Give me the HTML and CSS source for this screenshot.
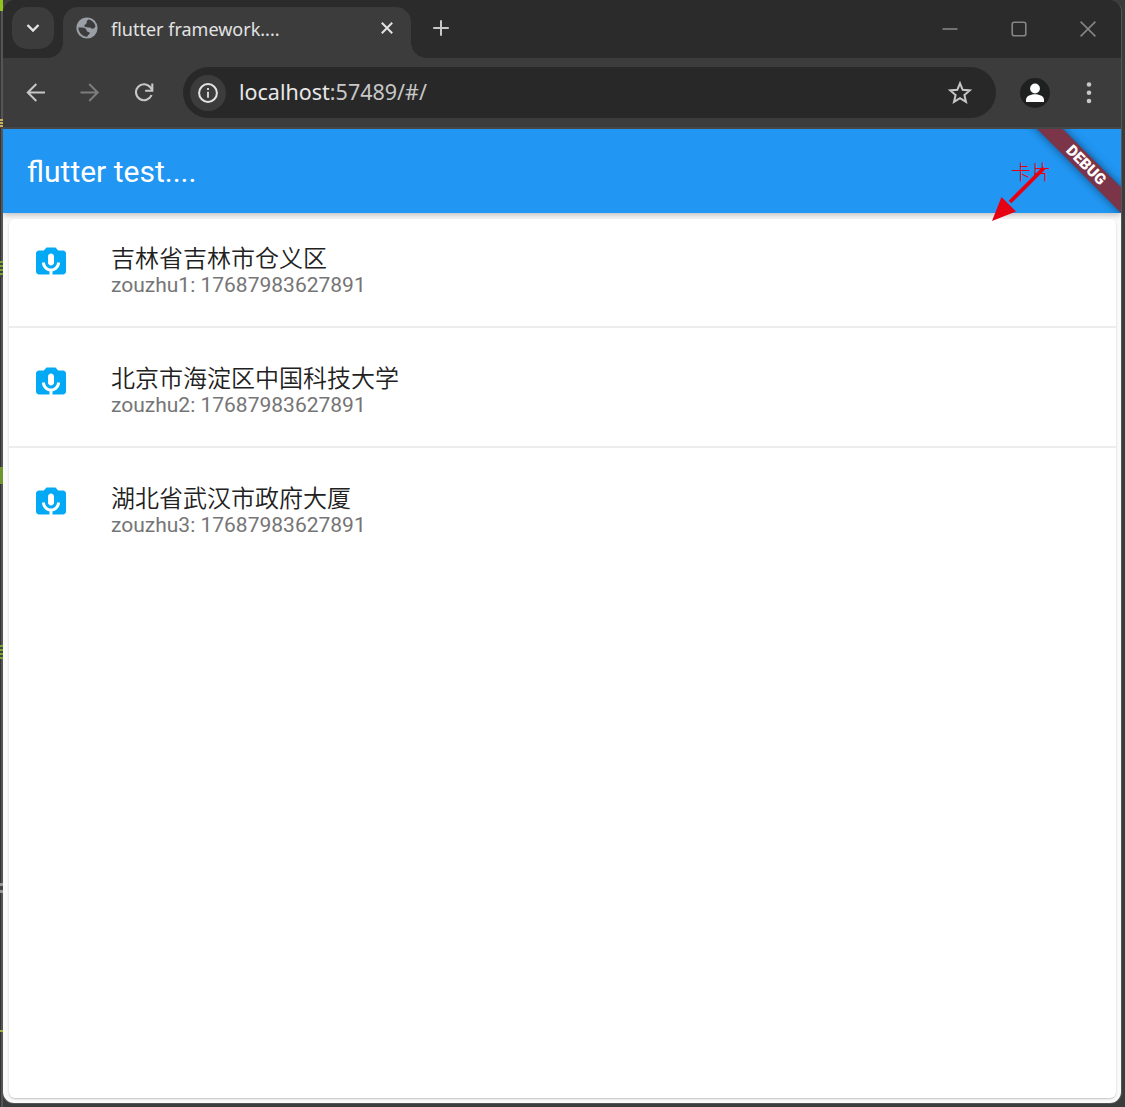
FILE: index.html
```html
<!DOCTYPE html>
<html lang="zh-CN">
<head>
<meta charset="utf-8">
<title>flutter framework....</title>
<link rel="stylesheet" href="styles.css">
</head>
<body>
<div class="desktop-edge" aria-hidden="true"><i class="mark m1"></i><i class="mark m2"></i><i class="mark m3"></i><i class="mark m4"></i><i class="mark m5"></i><i class="mark m6"></i><i class="mark m7"></i></div>
<div class="window">
  <header class="tab-strip">
    <button class="tab-search" aria-label="Search tabs"><svg width="16" height="12" viewBox="0 0 16 12"><path d="M2.500 3 8 8.500 13.500 3" fill="none" stroke="#e3e3e3" stroke-width="2.400"/></svg></button>
    <div class="tab">
      <svg class="globe" width="22" height="22" viewBox="0 0 22 22"><circle cx="11" cy="11" r="10.600" fill="#9aa0a6"/><path d="M12.400 2.400c3.500.5 6.300 3.300 7.100 6.900-.7 1.600-1.500 2.500-2.600 2.500-1.400 0-1.700-1.300-3.200-1.400-2.400 0-5.200-.2-5.400-1.700-.2-1.300 2.100-1.200 2.300-2.700.2-1.400-.2-2.100 1.800-3.600Z" fill="#3c3c3c"/><path d="M2.300 10.500c2.400.2 5.500-.2 7.200 1 1.600 1.200.6 2.500 2 3.200 1.100.6 2.300.3 2.300 1.300 0 1.200-1.700 1.400-2.600 3.700-5-.1-8.700-4.200-8.900-9.200Z" fill="#3c3c3c"/></svg>
      <span class="tab-title">flutter framework....</span>
      <svg class="tab-close" width="12" height="12" viewBox="0 0 12 12"><path d="m.8.8 10.400 10.400M11.200.8.8 11.200" stroke="#e3e3e3" stroke-width="2"/></svg>
    </div>
    <svg class="new-tab" width="16" height="16" viewBox="0 0 16 16"><path d="M8 .2v15.600M.2 8h15.600" stroke="#c7c7c7" stroke-width="2"/></svg>
    <div class="controls">
      <svg width="16" height="16" viewBox="0 0 16 16"><path d="M.5 8h15" stroke="#858585" stroke-width="1.600"/></svg>
      <svg width="16" height="16" viewBox="0 0 16 16"><rect x="1.200" y="1.200" width="13.600" height="13.600" rx="2" fill="none" stroke="#858585" stroke-width="1.600"/></svg>
      <svg width="16" height="16" viewBox="0 0 16 16"><path d="m.6.6 14.800 14.800M15.400.6.6 15.400" stroke="#858585" stroke-width="1.600"/></svg>
    </div>
  </header>
  <nav class="toolbar">
    <svg class="back" width="20" height="20" viewBox="0 0 20 20"><path d="M19 9.500H2M10.300 1 1.800 9.500l8.500 8.500" fill="none" stroke="#c7c7c7" stroke-width="2"/></svg>
    <svg class="forward" width="20" height="20" viewBox="0 0 20 20"><path d="M.5 9.500h17M9.200 1l8.500 8.500-8.500 8.500" fill="none" stroke="#7c7c7c" stroke-width="2"/></svg>
    <svg class="reload" width="20" height="20" viewBox="0 0 20 20"><path d="M17.500 12A8 8 0 1 1 16.600 4.700L18 6.700" fill="none" stroke="#c7c7c7" stroke-width="2.100"/><path d="M18.300.5v7.200h-7.200" fill="none" stroke="#c7c7c7" stroke-width="2.100"/></svg>
    <div class="address">
      <span class="site-info"><svg width="20" height="20" viewBox="0 0 20 20"><circle cx="10" cy="10" r="8.900" fill="none" stroke="#e3e3e3" stroke-width="2"/><path d="M10 8.800v6M10 5v2" stroke="#e3e3e3" stroke-width="1.800"/></svg></span>
      <span class="url"><b>localhost</b>:57489/#/</span>
      <svg class="star" width="24" height="24" viewBox="0 0 24 24"><path d="m12 2.300 2.700 6.500 7 .6-5.300 4.600 1.600 6.900-6-3.700-6 3.700L7.600 14 2.300 9.400l7-.6Z" fill="none" stroke="#c7c7c7" stroke-width="2"/></svg>
    </div>
    <span class="profile"><svg width="30" height="30" viewBox="0 0 30 30"><circle cx="15" cy="10.500" r="4.900" fill="#fff"/><path d="M6 24v-2.200c0-3.400 4-5.600 9-5.600s9 2.200 9 5.600V24Z" fill="#fff"/></svg></span>
    <svg class="menu" width="6" height="22" viewBox="0 0 6 22"><g fill="#c7c7c7"><circle cx="3" cy="2.500" r="2.300"/><circle cx="3" cy="10.700" r="2.300"/><circle cx="3" cy="19" r="2.300"/></g></svg>
  </nav>
  <main class="page">
    <div class="app-bar"><h1>flutter test....</h1></div>
    <div class="ribbon-clip"><span class="ribbon">DEBUG</span></div>
    <section class="card">
      <article class="item">
        <svg class="mic" viewBox="0 0 24 24"><path d="M20 5h-3.170L15 3H9L7.170 5H4c-1.100 0-2 .9-2 2v12c0 1.100.9 2 2 2h7v-2.090c-2.830-.48-5-2.940-5-5.910h2c0 2.210 1.790 4 4 4s4-1.790 4-4h2c0 2.970-2.170 5.430-5 5.910V21h7c1.100 0 2-.9 2-2V7c0-1.100-.9-2-2-2zm-6 8c0 1.100-.9 2-2 2s-2-.9-2-2V9c0-1.100.9-2 2-2s2 .9 2 2v4z"/></svg>
        <div><h2>吉林省吉林市仓义区</h2><p>zouzhu1: 17687983627891</p></div>
      </article>
      <article class="item">
        <svg class="mic" viewBox="0 0 24 24"><path d="M20 5h-3.170L15 3H9L7.170 5H4c-1.100 0-2 .9-2 2v12c0 1.100.9 2 2 2h7v-2.090c-2.830-.48-5-2.940-5-5.910h2c0 2.210 1.790 4 4 4s4-1.790 4-4h2c0 2.970-2.170 5.430-5 5.910V21h7c1.100 0 2-.9 2-2V7c0-1.100-.9-2-2-2zm-6 8c0 1.100-.9 2-2 2s-2-.9-2-2V9c0-1.100.9-2 2-2s2 .9 2 2v4z"/></svg>
        <div><h2>北京市海淀区中国科技大学</h2><p>zouzhu2: 17687983627891</p></div>
      </article>
      <article class="item">
        <svg class="mic" viewBox="0 0 24 24"><path d="M20 5h-3.170L15 3H9L7.170 5H4c-1.100 0-2 .9-2 2v12c0 1.100.9 2 2 2h7v-2.090c-2.830-.48-5-2.940-5-5.910h2c0 2.210 1.790 4 4 4s4-1.790 4-4h2c0 2.970-2.170 5.430-5 5.910V21h7c1.100 0 2-.9 2-2V7c0-1.100-.9-2-2-2zm-6 8c0 1.100-.9 2-2 2s-2-.9-2-2V9c0-1.100.9-2 2-2s2 .9 2 2v4z"/></svg>
        <div><h2>湖北省武汉市政府大厦</h2><p>zouzhu3: 17687983627891</p></div>
      </article>
    </section>
  </main>
</div>
<span class="note">卡片</span>
<svg class="arrow" width="60" height="60" viewBox="0 0 60 60"><path d="M54 8 20 42" stroke="#e60012" stroke-width="3.800"/><path d="M2 61 11.500 37 26 51.500Z" fill="#e60012"/></svg>
</body>
</html>
```
FILE: styles.css
```css
* { box-sizing: border-box; }
body {
  margin: 0;
  width: 1125px;
  height: 1107px;
  padding: 0 3px 3px 2px;
  background: #3b3d3d;
  font-family: Roboto, "Noto Sans CJK SC", sans-serif;
  overflow: hidden;
  position: relative;
}
svg { display: block; flex: none; }
.window {
  height: 1104px;
  width: 1120px;
  border: 1px solid #555757;
  border-top: 0;
  border-radius: 12px;
  background: #3c3c3c;
  overflow: hidden;
  display: flex;
  flex-direction: column;
}
.tab-strip {
  height: 58px;
  flex: none;
  background: #2b2b2b;
  display: flex;
  padding-left: 9px;
  align-items: flex-start;
}
.tab-search {
  width: 42px;
  height: 42px;
  margin: 7px 9px 0 0;
  padding: 0;
  border: 0;
  border-radius: 15px;
  background: #3c3c3c;
  display: grid;
  place-items: center;
}
.tab {
  width: 348px;
  height: 51px;
  margin-top: 7px;
  padding: 0 18px 9px 13px;
  border-radius: 15px 15px 0 0;
  background: #3c3c3c;
  display: flex;
  align-items: center;
  position: relative;
}
.tab::before, .tab::after {
  content: "";
  position: absolute;
  bottom: 0;
  width: 15px;
  height: 15px;
}
.tab::before { right: 100%; background: radial-gradient(circle at 0 0, transparent 14.5px, #3c3c3c 15px); }
.tab::after { left: 100%; background: radial-gradient(circle at 100% 0, transparent 14.5px, #3c3c3c 15px); }
.tab-title {
  margin-left: 13px;
  padding-top: 2px;
  font: 18px/24px "Noto Sans", sans-serif;
  color: #e3e3e3;
  white-space: nowrap;
}
.tab-close { margin-left: auto; }
.new-tab { margin: 20px 0 0 22px; }
.controls { display: flex; gap: 53px; margin: 21px 25px 0 auto; }
.toolbar {
  height: 71px;
  flex: none;
  border-bottom: 2px solid #4a4a4a;
  display: flex;
  align-items: center;
  padding: 0 29px 0 23px;
  background: #3c3c3c;
}
.forward { margin-left: 34px; }
.reload { margin-left: 34px; }
.address {
  width: 813px;
  height: 51px;
  margin-left: 29px;
  padding: 0 24px 0 7px;
  border-radius: 26px;
  background: #282828;
  display: flex;
  align-items: center;
}
.site-info {
  width: 36px;
  height: 36px;
  border-radius: 50%;
  background: #3c3c3c;
  display: grid;
  place-items: center;
}
.url {
  margin-left: 13px;
  padding-bottom: 2px;
  font: 21.5px/30px "Noto Sans", sans-serif;
  color: #c7c7c7;
  white-space: nowrap;
}
.url b { font-weight: 400; color: #e8e8e8; }
.star { margin-left: auto; }
.profile { width: 30px; height: 30px; border-radius: 50%; background: #1f2020; margin-left: 24px; }
.menu { margin-left: auto; }
.page {
  flex: 1;
  background: #fafafa;
  position: relative;
  display: flex;
  flex-direction: column;
  padding-bottom: 5px;
}
.app-bar {
  height: 84px;
  flex: none;
  background: #2196f3;
  box-shadow: 0 2px 6px rgba(0, 0, 0, .25);
  padding: 2px 24px 0;
  display: flex;
  align-items: center;
}
.app-bar h1 { margin: 0; font-size: 30px; line-height: 36px; font-weight: 400; color: #fff; }
.ribbon-clip { position: absolute; top: 0; right: 0; width: 150px; height: 84px; overflow: hidden; }
.ribbon {
  position: absolute;
  left: 35px;
  top: 27px;
  width: 160px;
  height: 18px;
  transform: rotate(45deg);
  background: #7c3449;
  box-shadow: 0 0 9px rgba(0, 0, 0, .5);
  color: #fff;
  font-size: 15.3px;
  font-weight: 900;
  line-height: 18px;
  text-align: center;
}
.card {
  flex: 1;
  margin: 6px 5px 0 6px;
  border-radius: 6px;
  background: #fff;
  box-shadow: 0 1px 2px rgba(0, 0, 0, .22);
}
.item { display: flex; height: 120px; padding: 24px 24px 0; gap: 42px; }
.item:first-child { height: 107px; }
.item + .item { border-top: 2px solid #ededed; padding-top: 35px; }
.mic { width: 36px; height: 36px; fill: #03a9f4; }
.item h2 { margin: -1px 0 1px; font: 350 24px/30px "Noto Sans CJK SC DemiLight", "Noto Sans CJK SC", sans-serif; color: #212121; }
.item p { margin: 0; font-size: 21px; line-height: 24px; color: #757575; }
.note { position: absolute; left: 1011px; top: 159px; font: 300 20px/26px "Noto Sans CJK SC", sans-serif; color: #e60012; }
.arrow { position: absolute; left: 990px; top: 160px; overflow: visible; }
.desktop-edge { position: absolute; left: 0; top: 0; width: 3px; height: 1107px; background: linear-gradient(90deg, #343434 1px, #555 1px); }
.mark { position: absolute; left: 0; width: 3px; background: #6f962c; }
.m1 { top: 0; height: 11px; background: #91c51e; }
.m2 { top: 119px; height: 9px; background: repeating-linear-gradient(#c6b35c 0 2px, #444 2px 3px); }
.m3 { top: 261px; height: 16px; background: repeating-linear-gradient(#79a52a 0 2px, #444 2px 4px); }
.m4 { top: 467px; height: 17px; }
.m5 { top: 645px; height: 14px; background: repeating-linear-gradient(#79a52a 0 2px, #444 2px 4px); }
.m6 { top: 883px; height: 10px; background: linear-gradient(#999 0 3px, #444 3px 7px, #999 7px); }
.m7 { top: 1030px; height: 2px; background: #9ab43a; }
```
